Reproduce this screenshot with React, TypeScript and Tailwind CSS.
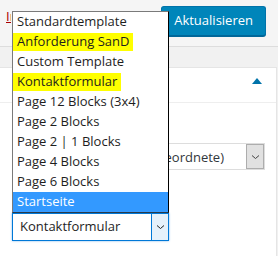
import React from 'react'

const templates = [
  { label: 'Standardtemplate' },
  { label: 'Anforderung SanD', marked: true },
  { label: 'Custom Template' },
  { label: 'Kontaktformular', marked: true },
  { label: 'Page 12 Blocks (3x4)' },
  { label: 'Page 2 Blocks' },
  { label: 'Page 2 | 1 Blocks' },
  { label: 'Page 4 Blocks' },
  { label: 'Page 6 Blocks' },
  { label: 'Startseite', selected: true },
]

function Chevron() {
  return (
    <svg width="9" height="6" viewBox="0 0 9 6">
      <path d="M1 1.5 L4.5 4.5 L8 1.5" fill="none" stroke="currentColor" strokeWidth="1" />
    </svg>
  )
}

export default function App() {
  return (
    <div
      className="relative w-[278px] h-[256px] overflow-hidden bg-[#f1f1f1]"
      style={{ fontFamily: '"Open Sans", "Noto Sans", sans-serif' }}
    >
      {/* Publish box footer */}
      <div className="h-[47px] bg-[#f5f5f5] border-b border-[#dddddd] flex items-start justify-between">
        <a className="mt-[9px] ml-[6px] w-[5px] overflow-hidden whitespace-nowrap text-[13px] leading-[14px] text-[#aa0000] underline">
          In den Papierkorb legen
        </a>
        <button className="mt-[6px] mr-[12px] h-[30px] px-[12px] rounded-[3px] bg-[#0085ba] border border-[#0073aa] border-b-[#006799] text-white text-[13px] shadow-[0_1px_0_#006799]">
          Aktualisieren
        </button>
      </div>

      <div className="h-[20px]" />

      {/* Page attributes box */}
      <div className="w-[277px] bg-white border-t border-r border-[#e5e5e5] h-[200px]">
        <div className="h-[35px] border-b border-[#eeeeee] flex items-start justify-end pr-[14px] pt-[10px]">
          <span className="w-0 h-0 border-l-[5px] border-r-[5px] border-b-[6px] border-l-transparent border-r-transparent border-b-[#0073aa]" />
        </div>
        <div className="pt-[40px] pr-[11px] flex justify-end">
          <div className="h-[27px] w-[97px] border border-l-0 border-[#dddddd] flex items-center bg-white">
            <div className="relative flex-1 h-full overflow-hidden">
              <span className="absolute right-[22px] top-[4px] text-[13px] leading-[18px] text-[#32373c] whitespace-nowrap">
                (keine übergeordnete)
              </span>
            </div>
            <span className="shrink-0 w-[18px] h-[25px] bg-[#e1e1e1] border border-[#adadad] flex items-center justify-center text-[#444]">
              <Chevron />
            </span>
          </div>
        </div>
      </div>

      {/* Open dropdown list */}
      <div className="absolute left-[12px] top-[11px] w-[157px] bg-white border border-[#7a7a7a] border-r-black border-b-black">
        {templates.map((t) => (
          <div
            key={t.label}
            className={`h-[20px] flex items-center text-[13px] whitespace-nowrap ${
              t.selected ? 'bg-[#3399ff] text-white pl-[4px]' : 'text-[#1e1e1e]'
            }`}
          >
            {t.marked ? (
              <span className="bg-[#ffff00] pl-[4px] pr-[4px] h-[18px] flex items-center">{t.label}</span>
            ) : (
              <span className={t.selected ? '' : 'pl-[4px]'}>{t.label}</span>
            )}
          </div>
        ))}
      </div>

      {/* Focused template select */}
      <div className="absolute left-[12px] top-[213px] w-[157px] h-[28px] bg-white border border-[#0078d7] shadow-[0_0_2px_#7eb4ea] flex items-center">
        <span className="flex-1 pl-[7px] text-[13px] text-[#1e1e1e] whitespace-nowrap">Kontaktformular</span>
        <span className="w-[17px] h-full bg-[#e5f1fb] border-l border-[#0078d7] flex items-center justify-center text-[#222]">
          <Chevron />
        </span>
      </div>
    </div>
  )
}
